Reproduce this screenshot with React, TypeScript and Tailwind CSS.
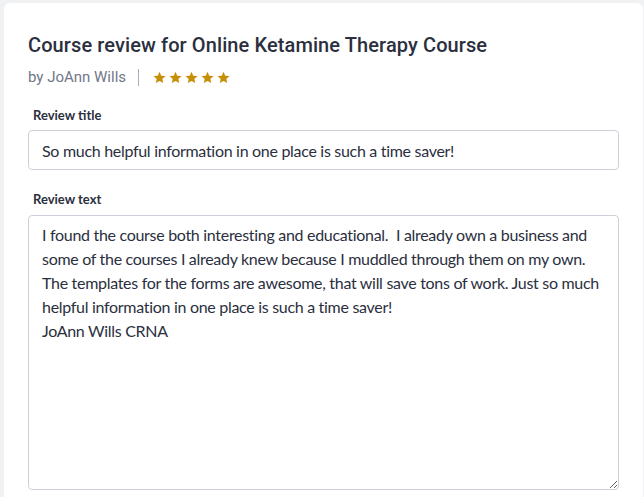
import { useState } from "react";

const Star = () => (
    <svg width="13" height="13" viewBox="0 0 24 24" className="fill-[#c8900a]">
        <path d="M12 1.5l3.2 7.1 7.8.8-5.8 5.2 1.7 7.6L12 18.3l-6.9 3.9 1.7-7.6L1 9.4l7.8-.8z" />
    </svg>
);

export default function App() {
    const [title, setTitle] = useState("So much helpful information in one place is such a time saver!");
    const [text, setText] = useState(
        "I found the course both interesting and educational.  I already own a business and some of the courses I already knew because I muddled through them on my own.  The templates for the forms are awesome, that will save tons of work. Just so much helpful information in one place is such a time saver!\nJoAnn Wills CRNA"
    );

    return (
        <div className="min-h-screen bg-[#f0f1f3] pt-[3px] pl-[4px] pr-[1px]">
            <div className="bg-white rounded-md px-6 pt-[28px] pb-6 font-['Lato',sans-serif]">
                <h1 className="font-['Roboto',sans-serif] font-medium text-[20px] leading-[28px] text-[#2b2f3e] tracking-[0.1px]">
                    Course review for Online Ketamine Therapy Course
                </h1>
                <div className="flex items-center mt-[6px] h-6">
                    <span className="font-['Roboto',sans-serif] text-[15px] text-[#717687]">by JoAnn Wills</span>
                    <span className="w-px h-[17px] bg-[#a9acbd] ml-[12px] mr-[14px]"></span>
                    <div className="flex gap-[3px]">
                        <Star /><Star /><Star /><Star /><Star />
                    </div>
                </div>
                <label htmlFor="title" className="block mt-[16px] ml-[5px] text-[13px] font-bold leading-5 text-[#2b2f3e]">
                    Review title
                </label>
                <input
                    id="title"
                    type="text"
                    value={title}
                    onChange={(e) => setTitle(e.target.value)}
                    className="mt-[5px] w-full h-10 border border-[#cfd0da] rounded px-[13px] text-[16px] tracking-[-0.3px] text-[#2b2f3e] outline-none"
                />
                <label htmlFor="text" className="block mt-[19px] ml-[5px] text-[13px] font-bold leading-5 text-[#2b2f3e]">
                    Review text
                </label>
                <textarea
                    id="text"
                    value={text}
                    onChange={(e) => setText(e.target.value)}
                    className="mt-[6px] block w-full h-[275px] border border-[#cfd0da] rounded px-[13px] pt-[7px] pb-[10px] text-[16px] leading-6 tracking-[-0.3px] text-[#2b2f3e] outline-none"
                />
            </div>
        </div>
    );
}
